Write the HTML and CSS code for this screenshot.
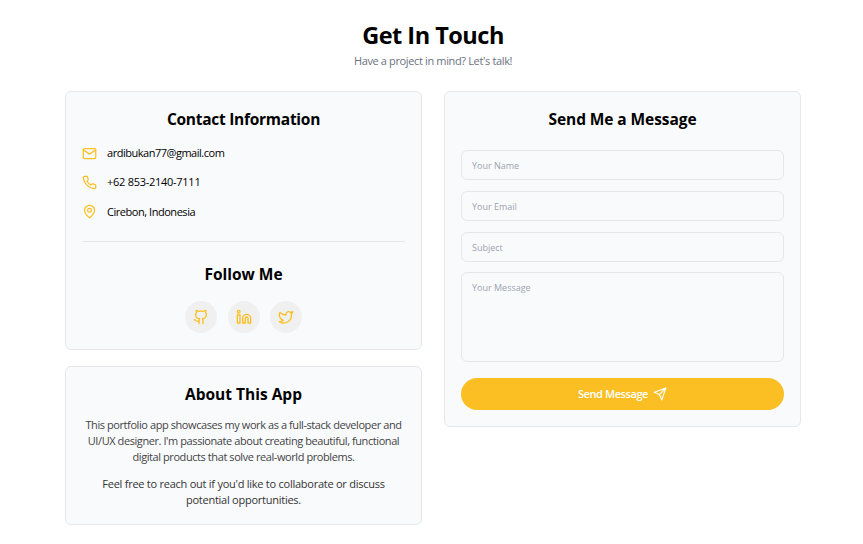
FILE: index.html
```html
<!DOCTYPE html>
<html lang="en">
<head>
<meta charset="utf-8">
<title>Get In Touch</title>
<link rel="stylesheet" href="styles.css">
</head>
<body>
<main class="page">
  <header class="intro">
    <h1>Get In Touch</h1>
    <p>Have a project in mind? Let's talk!</p>
  </header>
  <div class="columns">
    <div class="column">
      <section class="card contact">
        <h2 class="h-contact">Contact Information</h2>
        <ul class="details">
          <li><svg class="icon" viewBox="0 0 24 24"><rect x="2" y="4" width="20" height="16" rx="2"/><path d="m22 6-10 7L2 6"/></svg><span class="mail">ardibukan77@gmail.com</span></li>
          <li><svg class="icon" viewBox="0 0 24 24"><path d="M22 16.920v3a2 2 0 0 1-2.180 2 19.790 19.790 0 0 1-8.630-3.070 19.500 19.500 0 0 1-6-6 19.790 19.790 0 0 1-3.070-8.670A2 2 0 0 1 4.110 2h3a2 2 0 0 1 2 1.720 12.840 12.840 0 0 0 .7 2.810 2 2 0 0 1-.45 2.110L8.090 9.910a16 16 0 0 0 6 6l1.270-1.270a2 2 0 0 1 2.110-.45 12.840 12.840 0 0 0 2.810.7A2 2 0 0 1 22 16.920z"/></svg><span class="phone">+62 853-2140-7111</span></li>
          <li><svg class="icon" viewBox="0 0 24 24"><path d="M20 10c0 6-8 12-8 12s-8-6-8-12a8 8 0 0 1 16 0Z"/><circle cx="12" cy="10" r="3"/></svg><span class="place">Cirebon, Indonesia</span></li>
        </ul>
        <div class="follow">
          <h2>Follow Me</h2>
          <div class="socials">
            <a class="social"><svg class="icon" viewBox="0 0 24 24"><path d="M15 22v-4a4.800 4.800 0 0 0-1-3.500c3 0 6-2 6-5.500.08-1.250-.27-2.480-1-3.500.28-1.150.28-2.350 0-3.500 0 0-1 0-3 1.500-2.640-.5-5.360-.5-8 0C6 2 5 2 5 2c-.3 1.150-.3 2.350 0 3.500A5.400 5.400 0 0 0 4 9c0 3.500 3 5.500 6 5.500-.39.49-.68 1.050-.85 1.650-.17.6-.22 1.230-.15 1.850v4"/><path d="M9 18c-4.510 2-5-2-7-2"/></svg></a>
            <a class="social"><svg class="icon" viewBox="0 0 24 24"><path d="M16 8a6 6 0 0 1 6 6v7h-4v-7a2 2 0 0 0-4 0v7h-4v-7a6 6 0 0 1 6-6z"/><rect x="2" y="9" width="4" height="12"/><circle cx="4" cy="4" r="2"/></svg></a>
            <a class="social"><svg class="icon" viewBox="0 0 24 24"><path d="M22 4s-.7 2.100-2 3.400c1.600 10-9.400 17.300-18 11.600 2.200.1 4.400-.6 6-2C3 15.500.5 9.600 3 5c2.200 2.600 5.600 4.100 9 4-.9-4.200 4-6.600 7-3.800 1.100 0 3-1.200 3-1.200z"/></svg></a>
          </div>
        </div>
      </section>
      <section class="card about">
        <h2>About This App</h2>
        <p class="blurb">This portfolio app showcases my work as a full-stack developer and<br>UI/UX designer. I'm passionate about creating beautiful, functional<br>digital products that solve real-world problems.</p>
        <p class="blurb strong">Feel free to reach out if you'd like to collaborate or discuss<br>potential opportunities.</p>
      </section>
    </div>
    <section class="card message">
      <h2 class="h-message">Send Me a Message</h2>
      <form class="form">
        <input type="text" placeholder="Your Name">
        <input type="email" placeholder="Your Email">
        <input type="text" placeholder="Subject">
        <textarea placeholder="Your Message"></textarea>
        <button type="button"><span>Send Message</span><svg class="icon" viewBox="0 0 24 24"><path d="m22 2-7 20-4-9-9-4Z"/><path d="M22 2 11 13"/></svg></button>
      </form>
    </section>
  </div>
</main>
</body>
</html>
```
FILE: styles.css
```css
* { box-sizing: border-box; margin: 0; padding: 0; }
body {
  font-family: "Open Sans", "Noto Sans", sans-serif;
  font-size: 11px;
  color: #000;
  background: #fff;
}
.page { width: 736px; margin-left: 65px; padding-top: 18px; }
.intro { text-align: center; height: 73px; }
h1 { font-size: 23.5px; line-height: 35px; font-weight: 700; letter-spacing: -0.5px; }
.intro p { line-height: 16px; color: #6b7280; letter-spacing: -0.36px; }
.columns { display: grid; grid-template-columns: 357px 357px; gap: 22px; align-items: start; }
.column { display: flex; flex-direction: column; gap: 16px; }
.card { background: #f9fafc; border: 1px solid #e5e7eb; border-radius: 6px; padding: 15px 16px; }
.contact { height: 259px; }
.about { height: 159px; }
.message { height: 336px; }
h2 { font-size: 15.5px; line-height: 24px; font-weight: 700; text-align: center; }
.h-contact { letter-spacing: -0.27px; }
.h-message { letter-spacing: -0.08px; }
.icon { width: 15px; height: 15px; flex: none; fill: none; stroke: #fbbf24; stroke-width: 2; stroke-linecap: round; stroke-linejoin: round; }
.details { list-style: none; margin-top: 14px; display: flex; flex-direction: column; gap: 13.3px; }
.details li { display: flex; align-items: center; gap: 10px; height: 16px; line-height: 16px; }
.mail { letter-spacing: -0.48px; }
.phone { letter-spacing: -0.27px; }
.place { letter-spacing: -0.46px; }
.follow { border-top: 1px solid #e5e7eb; margin-top: 21px; padding-top: 20px; }
.socials { display: flex; justify-content: center; gap: 10.7px; margin-top: 15px; }
.social { width: 32px; height: 32px; border-radius: 50%; background: #f0f0f0; display: flex; align-items: center; justify-content: center; }
.social .icon { width: 16px; height: 16px; }
.blurb { margin-top: 11px; text-align: center; line-height: 16px; color: #444; letter-spacing: -0.42px; white-space: nowrap; }
.strong { color: #333; font-weight: 500; letter-spacing: -0.25px; }
.form { display: flex; flex-direction: column; margin-top: 19px; }
input, textarea { display: block; width: 100%; height: 30px; margin-bottom: 11px; padding: 0 10px; border: 1px solid #e5e7eb; border-radius: 6px; background: #f9fafc; font: 9px/14px "Open Sans", "Noto Sans", sans-serif; outline: none; resize: none; }
textarea { height: 90px; margin: -1px 0 16px; padding-top: 8px; }
::placeholder { color: #9ca3af; opacity: 1; }
button { height: 32px; border: 0; border-radius: 16px; background: #fbbf24; color: #fff; display: flex; align-items: center; justify-content: center; gap: 5px; padding-bottom: 1px; font: 600 11px "Open Sans", "Noto Sans", sans-serif; letter-spacing: -0.42px; }
button .icon { width: 14px; height: 14px; stroke: #fff; }
```
